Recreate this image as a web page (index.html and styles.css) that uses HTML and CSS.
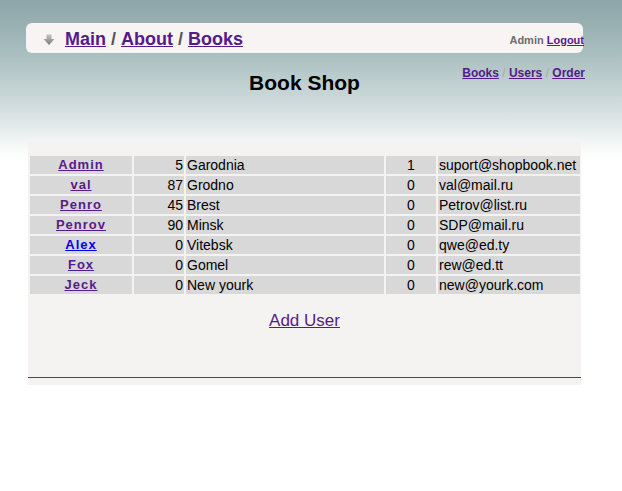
FILE: index.html
```html
<!DOCTYPE html>
<html>
<head>
<meta charset="utf-8">
<title>Book Shop</title>
<link rel="stylesheet" href="styles.css">
</head>
<body>
<div class="page">
  <div class="topbar">
    <div class="crumbs">
      <svg class="icon" width="12" height="12" viewBox="0 0 12 12">
        <defs>
          <linearGradient id="g" x1="0" y1="0" x2="0" y2="1">
            <stop offset="0" stop-color="#c4c4c4"/>
            <stop offset="1" stop-color="#7a7a7a"/>
          </linearGradient>
        </defs>
        <polygon points="3.5,0.5 8.5,0.5 8.5,5 11.5,5 6,11 0.5,5 3.5,5" fill="url(#g)"/>
      </svg>
      <a href="#" class="v">Main</a><span class="sep"> / </span><a href="#" class="v">About</a><span class="sep"> / </span><a href="#" class="v">Books</a>
    </div>
    <div class="user"><span class="uname">Admin</span> <a href="#" class="v">Logout</a></div>
  </div>
  <div class="titlerow">
    <h1 class="title">Book Shop</h1>
    <div class="nav"><a href="#" class="v">Books</a><span class="nsep"> / </span><a href="#" class="v">Users</a><span class="nsep"> / </span><a href="#" class="v">Order</a></div>
  </div>
  <div class="panel">
    <table class="users">
      <colgroup>
        <col class="c1"><col class="c2"><col class="c3"><col class="c4"><col class="c5">
      </colgroup>
      <tr><td class="name"><a href="#" class="v">Admin</a></td><td class="num">5</td><td>Garodnia</td><td class="cnt">1</td><td>suport@shopbook.net</td></tr>
      <tr><td class="name"><a href="#" class="v">val</a></td><td class="num">87</td><td>Grodno</td><td class="cnt">0</td><td>val@mail.ru</td></tr>
      <tr><td class="name"><a href="#" class="v">Penro</a></td><td class="num">45</td><td>Brest</td><td class="cnt">0</td><td>Petrov@list.ru</td></tr>
      <tr><td class="name"><a href="#" class="v">Penrov</a></td><td class="num">90</td><td>Minsk</td><td class="cnt">0</td><td>SDP@mail.ru</td></tr>
      <tr><td class="name"><a href="#" class="nv">Alex</a></td><td class="num">0</td><td>Vitebsk</td><td class="cnt">0</td><td>qwe@ed.ty</td></tr>
      <tr><td class="name"><a href="#" class="v">Fox</a></td><td class="num">0</td><td>Gomel</td><td class="cnt">0</td><td>rew@ed.tt</td></tr>
      <tr><td class="name"><a href="#" class="v">Jeck</a></td><td class="num">0</td><td>New yourk</td><td class="cnt">0</td><td>new@yourk.com</td></tr>
    </table>
    <div class="add"><a href="#" class="v">Add User</a></div>
    <div class="footer"></div>
  </div>
</div>
</body>
</html>
```

FILE: styles.css
```css
html, body {
  margin: 0;
  padding: 0;
}
body {
  font-family: "Liberation Sans", Arial, sans-serif;
  color: #000;
  background: #fff linear-gradient(to bottom, #8ca5a8 0px, #a7bcbe 50px, #c8d6d7 95px, #e4ebeb 128px, #f6f8f8 145px, #ffffff 160px) no-repeat;
  background-size: 100% 170px;
  min-height: 491px;
}
a.v { color: #551a8b; }
a.nv { color: #0000ee; }
.page {
  width: 557px;
  margin-left: 26px;
  padding-top: 23px;
}
.topbar {
  height: 30px;
  background: #f8f4f4;
  border-radius: 6px;
  display: flex;
  align-items: center;
  justify-content: space-between;
  padding-left: 17px;
  box-sizing: border-box;
}
.crumbs {
  display: flex;
  align-items: center;
  font-size: 18px;
  font-weight: bold;
  white-space: pre;
  padding-top: 3px;
}
.icon {
  margin-right: 10px;
  margin-top: 0;
}
.sep { color: #555; }
.user {
  font-size: 11px;
  font-weight: bold;
  padding-top: 3px;
  margin-right: -1px;
}
.uname { color: #6e6e6e; }
.titlerow {
  display: grid;
  grid-template-columns: 1fr auto 1fr;
  margin-top: 13px;
}
.title {
  grid-column: 2;
  margin: 5px 0 0;
  font-size: 21px;
  font-weight: bold;
  line-height: 24px;
}
.nav {
  grid-column: 3;
  justify-self: end;
  align-self: start;
  font-size: 12px;
  font-weight: bold;
  line-height: 14px;
  margin-right: -2px;
  white-space: pre;
}
.nsep { color: #aaa; font-weight: normal; }
.panel {
  margin: 47px 2px 0;
  background: #f5f2f2;
  padding-top: 12px;
}
.users {
  border-collapse: separate;
  border-spacing: 2px;
  table-layout: fixed;
  width: 554px;
  font-size: 14px;
}
.c1 { width: 102px; }
.c2 { width: 50px; }
.c3 { width: 198px; }
.c4 { width: 50px; }
.c5 { width: 142px; }
.users td {
  background: #d9d8d8;
  height: 18px;
  padding: 0 1px;
  line-height: 18px;
  white-space: nowrap;
  overflow: hidden;
}
.users td.name {
  text-align: center;
  font-size: 13px;
  font-weight: bold;
  letter-spacing: 1px;
}
.users td.num { text-align: right; }
.users td.cnt { text-align: center; }
.add {
  text-align: center;
  font-size: 17px;
  line-height: 20px;
  margin-top: 15px;
  height: 66px;
}
.footer {
  border-top: 1px solid #4a4a4a;
  height: 7px;
}
```
